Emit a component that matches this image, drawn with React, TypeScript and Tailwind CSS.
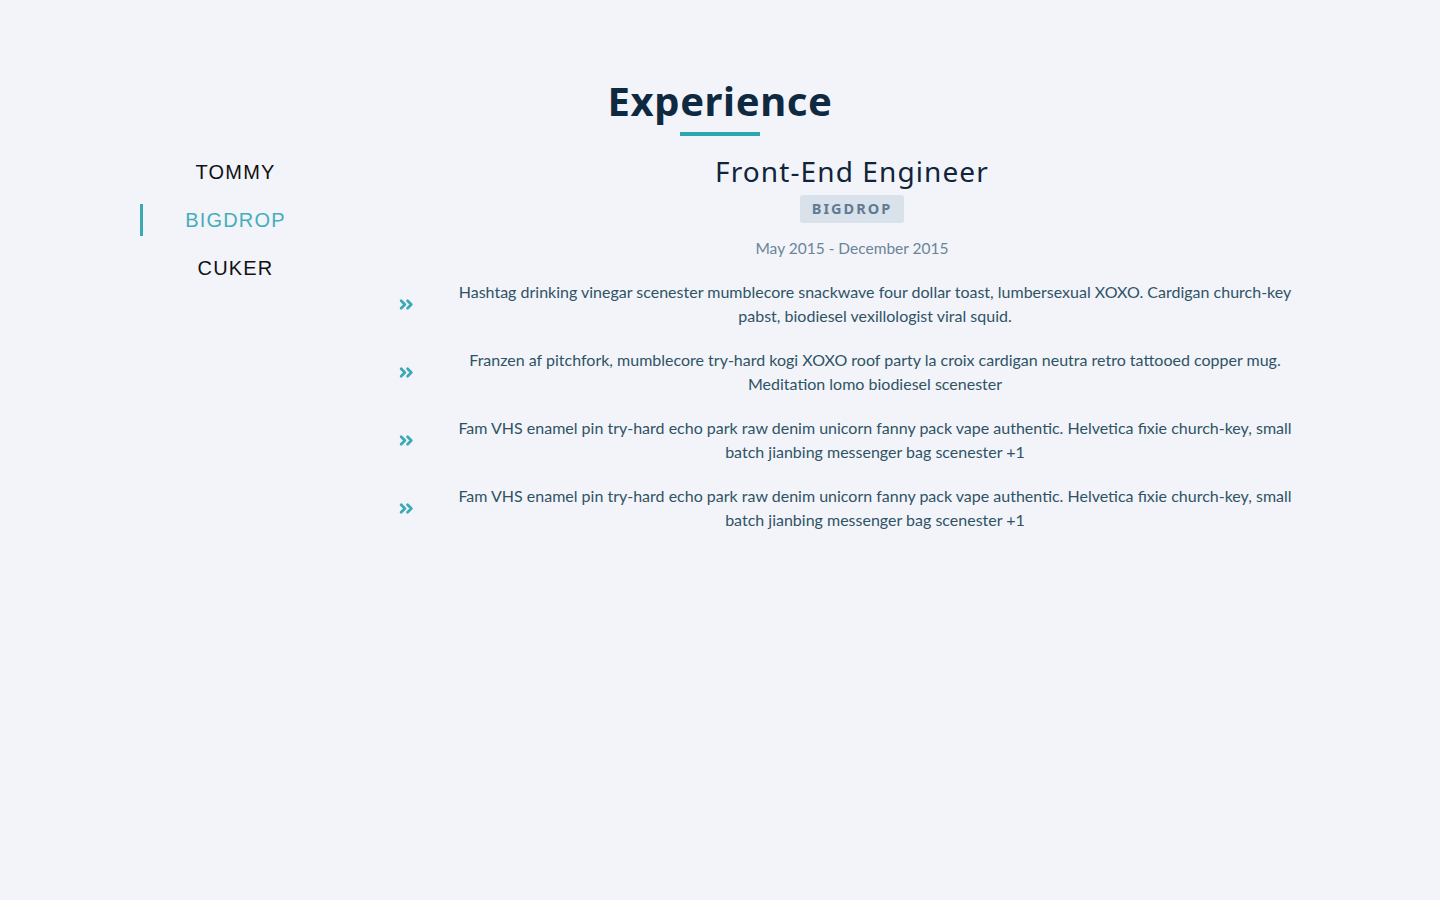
import React from "react";

const items = [
  "Hashtag drinking vinegar scenester mumblecore snackwave four dollar toast, lumbersexual XOXO. Cardigan church-key pabst, biodiesel vexillologist viral squid.",
  "Franzen af pitchfork, mumblecore try-hard kogi XOXO roof party la croix cardigan neutra retro tattooed copper mug. Meditation lomo biodiesel scenester",
  "Fam VHS enamel pin try-hard echo park raw denim unicorn fanny pack vape authentic. Helvetica fixie church-key, small batch jianbing messenger bag scenester +1",
  "Fam VHS enamel pin try-hard echo park raw denim unicorn fanny pack vape authentic. Helvetica fixie church-key, small batch jianbing messenger bag scenester +1",
];

const companies = [
  { name: "TOMMY", active: false },
  { name: "BIGDROP", active: true },
  { name: "CUKER", active: false },
];

function DoubleAngle() {
  return (
    <svg width="15" height="15" viewBox="0 0 14 14" fill="none">
      <path d="M2 3.5 L5.5 7 L2 10.5" stroke="#3aa9b5" strokeWidth="2.5" strokeLinecap="round" strokeLinejoin="round" />
      <path d="M8 3.5 L11.5 7 L8 10.5" stroke="#3aa9b5" strokeWidth="2.5" strokeLinecap="round" strokeLinejoin="round" />
    </svg>
  );
}

export default function App() {
  return (
    <div
      className="min-h-[900px] w-full bg-[#f2f4fa] pt-[76px]"
      style={{ fontFamily: "Lato, 'Noto Sans', sans-serif" }}
    >
      <div className="flex flex-col items-center">
        <h2 className="text-[40px] leading-[50px] font-bold tracking-[0.6px] text-[#0f2a40]" style={{ fontFamily: "'Noto Sans', Lato, sans-serif" }}>
          Experience
        </h2>
        <div className="mt-[6px] h-[4px] w-[80px] bg-[#2aa8b0]" />
      </div>

      <div className="mt-[12px] flex">
        <ul className="ml-[140px] w-[188px] shrink-0">
          {companies.map((c) => (
            <li key={c.name} className="flex h-[48px] items-center">
              <span className={`h-[32px] w-[3px] ${c.active ? "bg-[#3aa9b5]" : "bg-transparent"}`} />
              <span
                className={`flex-1 text-center text-[20px] tracking-[1.2px] ${c.active ? "text-[#46aebb]" : "text-[#111111]"}`}
                style={{ fontFamily: "'Liberation Sans', Arial, sans-serif" }}
              >
                {c.name}
              </span>
            </li>
          ))}
        </ul>

        <div className="ml-[62px] mt-[5px] w-[924px] shrink-0">
          <div className="flex flex-col items-center">
            <h3 className="text-[28px] leading-[36px] tracking-[1.1px] text-[#10253a]" style={{ fontFamily: "'Noto Sans', Lato, sans-serif" }}>
              Front-End Engineer
            </h3>
            <span className="mt-[6px] flex h-[28px] items-center rounded-[3px] bg-[#d9e1ea] px-[12px] text-[14.5px] font-bold tracking-[2px] text-[#5f7a93]" style={{ fontFamily: "'Noto Sans', Lato, sans-serif" }}>
              BIGDROP
            </span>
            <p className="mt-[13px] text-[15.5px] leading-[24px] text-[#6b8496]">
              May 2015 - December 2015
            </p>
          </div>

          <ul className="mt-[20px] flex flex-col gap-[20px]">
            {items.map((t, i) => (
              <li key={i} className="flex items-center">
                <span className="flex w-[50px] shrink-0 pl-[9px]">
                  <DoubleAngle />
                </span>
                <p className="mr-[4px] flex-1 text-center text-[16px] leading-[24px] text-[#2f5364]">{t}</p>
              </li>
            ))}
          </ul>
        </div>
      </div>
    </div>
  );
}
